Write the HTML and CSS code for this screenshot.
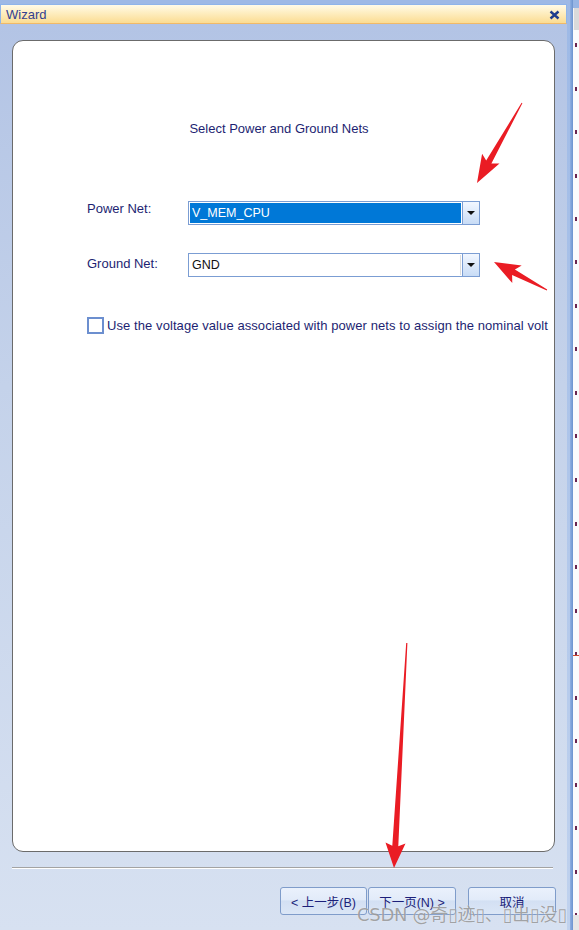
FILE: index.html
```html
<!DOCTYPE html>
<html lang="en">
<head>
    <meta charset="UTF-8">
    <meta name="viewport" content="width=device-width, initial-scale=1.0">
    <title>Wizard</title>
    <link rel="stylesheet" href="styles.css">
</head>
<body>
    <div class="screen">
        <div class="dialog">
            <div class="titlebar">
                <span class="title">Wizard</span>
                <svg class="close" width="11" height="10" viewBox="0 0 11 10">
                    <path d="M1.5 1.5 L9.5 8.5 M9.5 1.5 L1.5 8.5" stroke="#1f3d8d" stroke-width="2.4" fill="none"/>
                </svg>
            </div>

            <div class="dlg-body">
                <div class="panel">
                    <h1 class="heading">Select Power and Ground Nets</h1>

                    <div class="field field-power">
                        <label>Power Net:</label>
                        <div class="combo">
                            <div class="combo-value selected">V_MEM_CPU</div>
                            <div class="combo-btn"><span class="tri"></span></div>
                        </div>
                    </div>

                    <div class="field field-ground">
                        <label>Ground Net:</label>
                        <div class="combo">
                            <div class="combo-value">GND</div>
                            <div class="combo-btn"><span class="tri"></span></div>
                        </div>
                    </div>

                    <label class="check">
                        <span class="box"></span>
                        <span class="check-text">Use the voltage value associated with power nets to assign the nominal volt</span>
                    </label>
                </div>

                <div class="separator"></div>

                <div class="buttons">
                    <button class="btn btn-back">&lt; 上一步(B)</button>
                    <button class="btn btn-next">下一页(N) &gt;</button>
                    <button class="btn btn-cancel">取消</button>
                </div>
            </div>
        </div>

        <!-- janela do programa atras do wizard -->
        <div class="backdrop">
            <div class="edge-light"></div>
            <div class="edge-dark"></div>
            <div class="app">
                <div class="app-top"></div>
                <div class="app-rows"></div>
                <div class="app-bottom"></div>
            </div>
        </div>
    </div>

    <div class="watermark">CSDN @奇▯迹▯、▯出▯没▯</div>

    <svg class="arrows" width="579" height="930" viewBox="0 0 579 930">
        <polygon points="522.4,103.2 491.4,163.6 499.5,163.5 477,183 482.1,153.7 486.2,160.6 521.6,102.8"/>
        <polygon points="547.2,289.6 514.9,269.6 521.7,265.4 494,262 512.3,283.1 512.1,275.0 546.8,290.4"/>
        <polygon points="407.4,643 398.3,846.2 405.5,843.6 394,868 385.5,842.4 392.3,845.8 406.2,643"/>
    </svg>
</body>
</html>
```

FILE: styles.css
```css
* {
    margin: 0;
    padding: 0;
    box-sizing: border-box;
}

body {
    width: 579px;
    height: 930px;
    overflow: hidden;
    font-family: "Liberation Sans", Arial, sans-serif;
    position: relative;
    background-color: #b5c8ea;
}

.screen {
    display: flex;
    height: 930px;
}

/* janela do wizard */
.dialog {
    width: 567px;
    display: flex;
    flex-direction: column;
    background-color: #9db9e6;
    padding-top: 4px;
}

.titlebar {
    height: 20px;
    display: flex;
    align-items: center;
    justify-content: space-between;
    padding: 0 6px 0 5px;
    border: 1px solid #8eb4ea;
    border-bottom: 1px solid #f0b968;
    background: linear-gradient(#fffbe8 0%, #feefc4 40%, #fbdc92 100%);
}

.title {
    font-size: 13px;
    color: #34418f;
}

.close {
    display: block;
    margin-top: 1px;
}

.dlg-body {
    flex: 1;
    display: flex;
    flex-direction: column;
    padding: 16px 0 0 12px;
    background: linear-gradient(#b3c4e5 0%, #c4d2ea 40%, #d7e1f1 100%);
}

.panel {
    width: 543px;
    height: 812px;
    background-color: white;
    border: 1px solid #6b6b6b;
    border-radius: 11px;
    overflow: hidden;
    padding: 80px 0 0 74px;
    color: #1d1f72;
}

.heading {
    font-size: 13px;
    font-weight: normal;
    line-height: 16px;
    text-align: center;
    padding-right: 83px;
}

.field {
    display: flex;
    align-items: flex-start;
}

.field-power {
    margin-top: 64px;
}

.field-ground {
    margin-top: 28px;
}

.field label {
    width: 101px;
    font-size: 13px;
    line-height: 16px;
}

.field-ground label {
    padding-top: 3px;
}

.combo {
    width: 292px;
    height: 24px;
    display: flex;
    border: 1px solid #7b9dd3;
    background-color: white;
}

.combo-value {
    width: 271px;
    margin: 1px;
    padding-left: 2px;
    font-size: 12.5px;
    line-height: 20px;
    color: #111;
    border-right: 1px solid #dcdcdc;
}

.combo-value.selected {
    background-color: #0078d7;
    color: white;
    border-right: 1px solid #0078d7;
}

.combo-btn {
    flex: 1;
    display: flex;
    align-items: center;
    justify-content: center;
    border-left: 1px solid #7b9dd3;
    background: linear-gradient(#f2f7ff, #c8dcf6);
}

.tri {
    width: 0;
    height: 0;
    border-left: 4px solid transparent;
    border-right: 4px solid transparent;
    border-top: 4px solid #111;
}

.check {
    display: flex;
    align-items: center;
    margin-top: 39px;
}

.box {
    width: 17px;
    height: 17px;
    border: 2px solid #6c8fcf;
    background-color: white;
    flex-shrink: 0;
}

.check-text {
    margin-left: 3px;
    font-size: 13px;
    line-height: 16px;
    letter-spacing: 0.08px;
    padding-top: 2px;
    white-space: nowrap;
}

.separator {
    width: 541px;
    margin-top: 15px;
    border-top: 1px solid #a3a3a3;
    border-bottom: 1px solid #ffffff;
}

.buttons {
    display: flex;
    justify-content: flex-end;
    width: 544px;
    margin-top: 18px;
}

.btn {
    height: 28px;
    width: 88px;
    font-family: "Liberation Sans", "Noto Sans CJK SC", sans-serif;
    font-size: 12.5px;
    color: #1c1f7a;
    border: 1px solid #7f9cca;
    border-radius: 3px;
    background: linear-gradient(#eaf1fc 0%, #e2ebf9 45%, #d3e0f3 50%, #dbe6f6 100%);
}

.btn-back {
    width: 87px;
}

.btn-next {
    margin-left: 1px;
}

.btn-cancel {
    margin-left: 12px;
}

/* programa ao fundo */
.backdrop {
    width: 12px;
    display: flex;
}

.edge-light {
    width: 3px;
    background: linear-gradient(#9db9e6, #c0d2ee);
}

.edge-dark {
    width: 3px;
    background: linear-gradient(to right, #8fb0e2, #6b93cf);
}

.app {
    flex: 1;
    display: flex;
    flex-direction: column;
    padding-top: 8px;
    background-color: #97b5e4;
}

.app-top {
    height: 22px;
    background-color: #dadada;
    border-left: 1px solid #f4f4f4;
}

.app-rows {
    flex: 1;
    background-color: #fbfbfd;
    background-image:
        linear-gradient(#d2472d, #d2472d),
        repeating-linear-gradient(transparent 0px, transparent 13px, #6a2450 13px, #6a2450 17px, transparent 17px, transparent 43.5px);
    background-size: 6px 1px, 2px 100%;
    background-position: 0 625px, 2px 0;
    background-repeat: no-repeat, repeat-y;
}

.app-bottom {
    height: 15px;
    background-color: #e6e6e6;
}

/* marca d'agua e setas por cima */
.watermark {
    position: absolute;
    left: 357px;
    top: 900px;
    font-family: "DejaVu Sans", "Noto Sans CJK SC", sans-serif;
    font-size: 18px;
    letter-spacing: -0.3px;
    color: rgba(125, 125, 125, 0.7);
    text-shadow: 0 0 1px rgba(255, 255, 255, 0.8);
    white-space: nowrap;
}

.arrows {
    position: absolute;
    left: 0;
    top: 0;
    pointer-events: none;
}

.arrows polygon {
    fill: #ea1c24;
}
```
